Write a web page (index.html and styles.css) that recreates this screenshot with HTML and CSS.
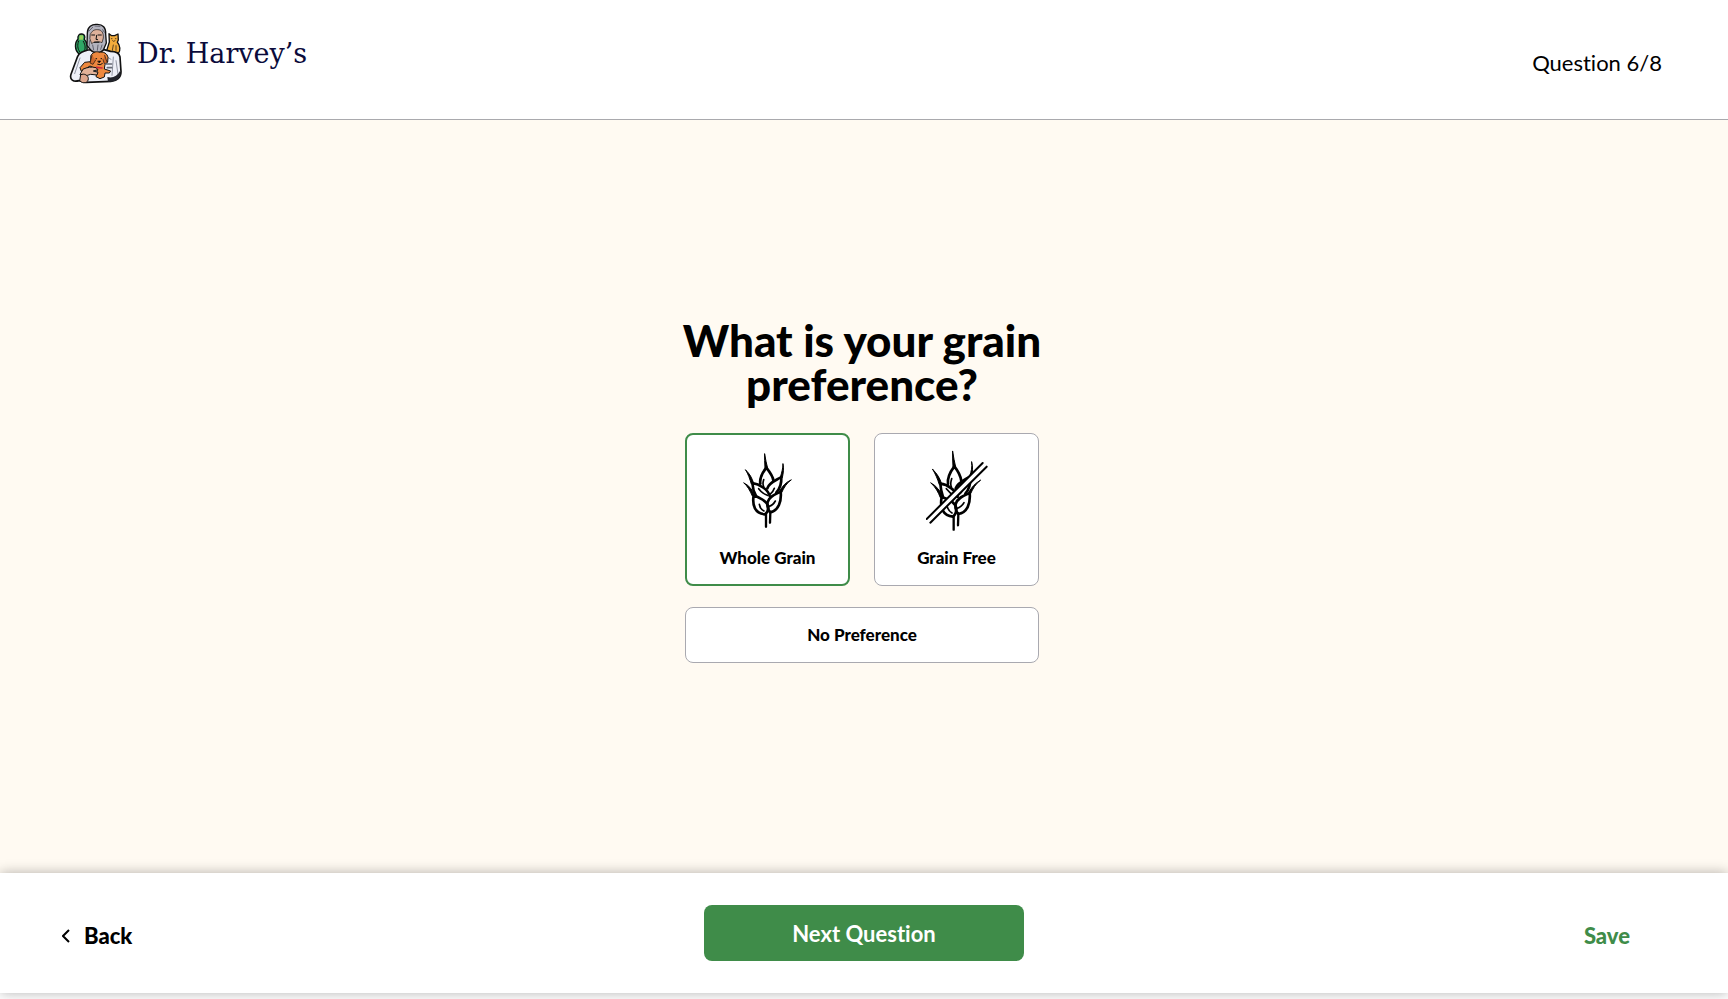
FILE: index.html
```
<!DOCTYPE html>
<html lang="en">
<head>
  <meta charset="UTF-8" />
  <title>Dr. Harvey’s - Grain Preference</title>
  <meta name="viewport" content="width=device-width, initial-scale=1.0" />
  <link rel="stylesheet" href="styles.css">
</head>
<body>
  <header class="header">
    <a class="logo" href="#">
      <svg class="logo-mark" viewBox="26 24 160 186" aria-hidden="true">
        <g stroke="#111" stroke-width="4" stroke-linejoin="round" stroke-linecap="round">
          <!-- parrot -->
          <path fill="#2fa866" d="M52 72C50 62 56 56 64 57C73 58 74 66 71 73C80 82 82 100 77 113L54 116C42 106 41 84 52 72Z"/>
          <path fill="#9bd05a" stroke="none" d="M57 61h10v13h-12z"/>
          <path fill="none" stroke-width="3" d="M54 78C49 90 51 102 57 110M68 79C75 92 75 101 70 109"/>
          <!-- cat -->
          <path fill="#f3ac3c" d="M145 56L153 62H162L172 57L173 75L170 82C179 91 180 107 173 115L158 122L154 132L147 126L139 104L146 81Z"/>
          <path fill="none" stroke-width="2" d="M152 71h2M164 71h2M156 77l3 2l4-2M158 90l-3 16M166 92v14"/>
          <!-- coat -->
          <path fill="#eef0f8" stroke-width="5" d="M82 105C67 109 56 112 51 124L31 178C26 194 38 202 55 197L76 202L151 199C168 199 181 188 181 170L178 126C176 114 164 109 150 109L127 103Z"/>
          <path fill="none" stroke="#9296a4" stroke-width="3" d="M58 129L42 176M158 126L154 181M138 125L151 133M166 137L172 178"/>
          <path fill="#22242c" stroke="none" d="M140 186C156 190 170 184 178 168L180 180C174 194 162 202 142 200Z"/>
          <!-- head -->
          <path fill="#b4b4bf" d="M80 54C80 35 94 27 108 28C127 27 136 39 135 57L137 84L128 105C119 116 98 115 90 105L79 91Z"/>
          <path fill="#deb19b" stroke-width="2" d="M89 58C93 48 101 43 111 44C123 44 129 53 128 69L124 83C113 78 101 79 93 86L88 72Z"/>
          <path fill="none" stroke-width="3" d="M93 60h9M112 60h10M108 61l-2 12l5 1M101 82h14"/>
          <path fill="none" stroke="#62626e" stroke-width="3" d="M86 47L96 37M103 33l15 1M126 44l5 8M86 77v16M96 90l3 15M112 90l-2 16M124 90l-4 13"/>
          <!-- dog -->
          <path fill="#ed883f" stroke-width="3" d="M91 121C97 109 111 109 116 112C128 109 140 115 142 128L141 141L133 148L131 162L150 168L146 174L133 174L131 186L118 191L106 185L110 164L88 153L62 169L58 158L72 142L89 140Z"/>
          <path fill="#cf692c" stroke-width="2" d="M94 121L88 144L97 148L105 135M132 121L140 144L131 146L127 134"/>
          <path fill="none" stroke-width="3" d="M106 131h2M121 131h2M111 148q8 4 14-2"/>
          <path stroke-width="2" d="M112 138h8l-4 5z"/>
          <path stroke="#cf293c" stroke-width="5" d="M108 157l16 2"/>
          <!-- hands -->
          <path fill="#e2b299" stroke-width="3" d="M68 162C80 157 93 154 106 158L112 164L98 168L112 172L109 180L90 178L77 182L59 179Z"/>
          <path fill="#dda68d" stroke-width="3" d="M61 179C71 174 83 181 83 191C83 204 67 208 58 198Z"/>
          <path stroke="#666a75" stroke-width="5" d="M135 147h18M140 158h13"/>
        </g>
      </svg>
      <span class="logo-text">Dr. Harvey’s</span>
    </a>
    <div class="progress">Question 6/8</div>
  </header>

  <main class="main">
    <form class="quiz" id="quiz">
      <h1 class="title">What is your grain preference?</h1>
      <div class="options">
        <label class="card">
          <input type="radio" name="grain" value="whole" checked />
          <svg class="grain-icon" viewBox="172 76 186 244" aria-hidden="true">
            <g fill="none" stroke="#000" stroke-width="8" stroke-linecap="round" stroke-linejoin="round">
              <!-- awns -->
              <path fill="#000" stroke-width="3" d="M255 87L259 109L264 130L256 130L255 108ZM310 117C313 130 311 145 308 158L302 157C306 143 310 130 310 117ZM198 135C210 146 217 159 222 175L215 177C210 161 206 148 198 135ZM334 165C321 174 312 189 306 203L300 198C309 183 318 172 334 165ZM193 174C209 182 219 195 226 212L218 213C211 197 204 184 193 174Z"/>
              <!-- grains -->
              <path d="M260 128C249 142 239 158 242 176M260 128C271 142 280 154 281 166"/>
              <path d="M305 156C290 166 268 172 263 190M305 156C306 178 301 191 290 202"/>
              <path d="M218 174C239 177 266 194 270 213M218 174C219 189 223 202 229 213"/>
              <path d="M303 200C288 207 269 214 264 231C261 245 266 255 271 262M303 200C306 229 297 257 271 262"/>
              <path d="M222 211C240 218 264 228 266 246C266 257 262 264 256 268M222 211C217 242 226 265 256 268"/>
              <path stroke-width="5" d="M252 164Q248 177 252 185M237 191Q247 205 263 211M271 208Q281 200 284 190M287 228Q280 241 268 244M239 238Q241 252 253 258"/>
              <path stroke-width="7" d="M259 268V305M272 262L271 293"/>
            </g>
          </svg>
          <span>Whole Grain</span>
        </label>
        <label class="card">
          <input type="radio" name="grain" value="free" />
          <svg class="grain-icon" viewBox="168 76 186 244" aria-hidden="true">
            <g fill="none" stroke="#000" stroke-width="8" stroke-linecap="round" stroke-linejoin="round">
              <!-- awns -->
              <path fill="#000" stroke-width="3" d="M248 79L252 103L257 126L249 126L248 103ZM305 111C309 126 308 141 305 154L299 153C304 140 307 126 305 111ZM188 133C201 146 210 160 215 177L208 179C203 163 197 148 188 133ZM331 166C317 176 308 192 302 206L296 202C305 187 315 175 331 166ZM183 174C200 183 211 198 219 216L211 218C205 202 197 187 183 174Z"/>
              <!-- grains -->
              <path d="M253 124C241 140 231 158 234 177M253 124C265 139 272 153 274 168"/>
              <path d="M302 153C287 164 263 172 257 190M302 153C302 178 298 193 286 206"/>
              <path d="M211 176C233 178 260 198 263 216M211 176C212 192 215 205 219 216"/>
              <path d="M299 204C283 211 263 218 257 237C255 250 260 262 265 267M299 204C302 235 292 263 265 267"/>
              <path d="M215 216C235 222 258 233 259 252C259 263 255 270 249 275M215 216C209 249 219 272 249 275"/>
              <path stroke-width="5" d="M245 161Q240 177 244 185M229 191Q240 205 254 213M264 211Q275 204 279 192M282 233Q275 246 261 250M231 243Q235 258 246 264"/>
              <path stroke-width="7" d="M251 275V314M265 268L264 301"/>
              <!-- strike-through -->
              <path stroke="#fff" stroke-width="16" stroke-linecap="butt" d="M175 288L345 119"/>
              <path stroke-width="6" d="M170 282L338 114M181 293L350 125"/>
            </g>
          </svg>
          <span>Grain Free</span>
        </label>
        <label class="card card-wide">
          <input type="radio" name="grain" value="none" />
          <span>No Preference</span>
        </label>
      </div>
    </form>
  </main>

  <footer class="footer">
    <button class="back" type="button">
      <svg class="chevron" viewBox="0 0 8 14" aria-hidden="true"><path d="M7 1L1 7L7 13" fill="none" stroke="#000" stroke-width="2"/></svg>
      Back
    </button>
    <button class="next" type="submit" form="quiz">Next Question</button>
    <button class="save" type="button">Save</button>
  </footer>
</body>
</html>
```
FILE: styles.css
```
* { box-sizing: border-box; }
body {
  margin: 0;
  min-height: 100vh;
  display: flex;
  flex-direction: column;
  background-color: #fff;
  color: #000;
  font-family: Lato, sans-serif;
  font-variant-ligatures: none;
}
button { border: none; background: none; padding: 0; font: inherit; cursor: pointer; }

.header {
  display: flex;
  justify-content: space-between;
  align-items: flex-start;
  height: 120px;
  padding: 23px 66px 0 69px;
  border-bottom: 1px solid #a9a9ad;
}
.logo {
  display: flex; align-items: center; gap: 14px;
  color: #0b0b3b; text-decoration: none;
}
.logo-mark { width: 54px; height: 62px; }
.logo-text { font-family: "DejaVu Serif", serif; font-size: 27px; line-height: 32px; }
.progress { font-size: 22px; line-height: 28px; padding-top: 26px; }

.main {
  flex: 1;
  display: flex;
  justify-content: center;
  align-items: center;
  padding: 0 4px 12px 0;
  background-color: #fffaf2;
}
.title {
  margin: 0 0 27px;
  font-size: 44px; line-height: 44px; font-weight: 900;
  text-align: center;
}
.quiz { width: 362px; }
.options {
  display: grid;
  grid-template-columns: 1fr 1fr;
  gap: 21px 24px;
  padding: 0 4px;
}
.card {
  display: flex;
  flex-direction: column;
  align-items: center;
  gap: 16px;
  height: 153px;
  padding-top: 16px;
  background-color: #fff;
  border: 1px solid #a9a9b0;
  border-radius: 8px;
  font-size: 17px; line-height: 20px; font-weight: 900;
  cursor: pointer;
}
.card:has(input:checked) { border: 2px solid #3f8c49; padding-top: 15px; }
.card input { position: absolute; opacity: 0; pointer-events: none; }
.card-wide { grid-column: 1 / -1; height: 56px; padding: 0; justify-content: center; }
.grain-icon { width: 62px; height: 82px; }

.footer {
  display: grid;
  grid-template-columns: 1fr 320px 1fr;
  align-items: center;
  height: 120px;
  margin-bottom: 6px;
  padding: 0 62px;
  background-color: #fff;
  box-shadow: 0 0 12px rgba(0, 0, 0, 0.3);
}
.back, .save { font-size: 22px; line-height: 28px; font-weight: 900; padding-top: 6px; }
.back { display: flex; align-items: center; gap: 14px; justify-self: start; }
.chevron { width: 8px; height: 14px; }
.next {
  height: 56px;
  border-radius: 8px;
  background-color: #3f8c49;
  color: #fff;
  font-size: 22px; font-weight: 700;
}
.save { justify-self: end; margin-right: 36px; color: #3f8c49; }
```
